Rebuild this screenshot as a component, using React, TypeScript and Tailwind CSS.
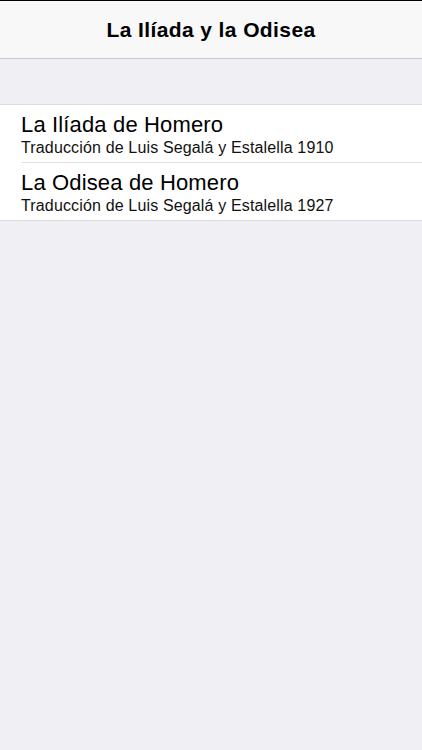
const books = [
  { title: "La Ilíada de Homero", subtitle: "Traducción de Luis Segalá y Estalella 1910" },
  { title: "La Odisea de Homero", subtitle: "Traducción de Luis Segalá y Estalella 1927" },
];

export default function App() {
  return (
    <div
      className="flex flex-col w-[422px] h-[750px] bg-[#efeff4] overflow-hidden"
      style={{ fontFamily: '"Liberation Sans", Arial, sans-serif' }}
    >
      <div className="h-[1px] bg-black" />
      <div className="h-[58px] flex items-center justify-center bg-[#f8f8f8] border-b border-[#c8c7cc]">
        <h1 className="text-[21px] leading-[26px] font-semibold tracking-[0.4px] text-black">La Ilíada y la Odisea</h1>
      </div>

      <div className="h-[45px]" />

      <div className="bg-white border-t border-b border-[#dcdce0]">
        {books.map((book, index) => (
          <div key={book.title} className="pl-[21px]">
            <div className={`box-content h-[57px] pt-0 flex flex-col justify-center ${index > 0 ? "border-t border-[#e2e2e6]" : ""}`}>
              <div className="pt-[2px] text-[22px] leading-[26px] tracking-[0.15px] text-black">{book.title}</div>
              <div className="text-[16px] leading-[19px] tracking-[0.15px] text-[#111]">{book.subtitle}</div>
            </div>
          </div>
        ))}
      </div>
    </div>
  );
}
